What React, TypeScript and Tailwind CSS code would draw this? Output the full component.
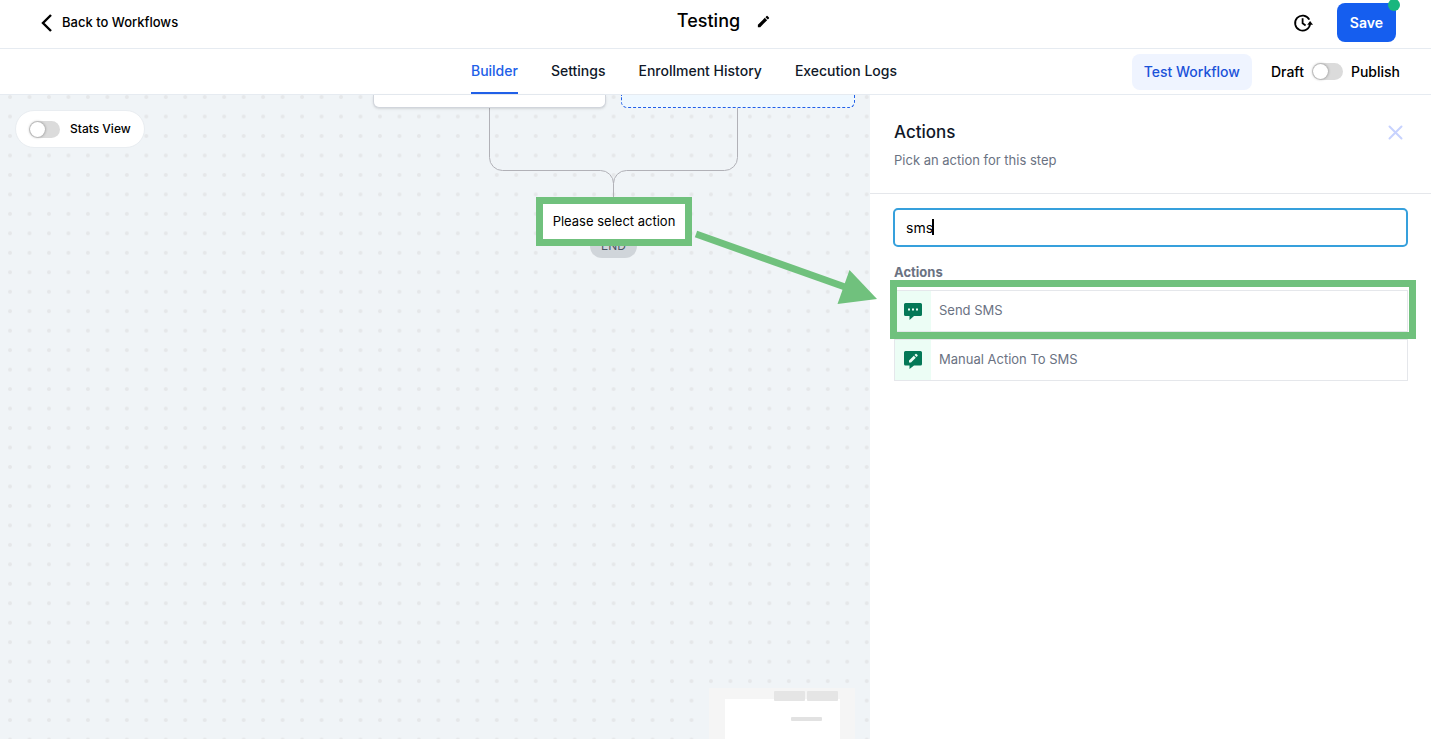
import { useState } from 'react';
import { MdEdit } from 'react-icons/md';

const tabs = ['Builder', 'Settings', 'Enrollment History', 'Execution Logs'];

const actions = [
  { name: 'Send SMS', icon: <SmsIcon /> },
  { name: 'Manual Action To SMS', icon: <ManualSmsIcon /> },
];

function SmsIcon() {
  return (
    <svg width="18" height="17" viewBox="0 0 18 17" aria-hidden="true">
      <path d="M1.5 0h15A1.5 1.5 0 0 1 18 1.5v10a1.5 1.5 0 0 1-1.5 1.5H10l-4.500 4V13h-4A1.5 1.5 0 0 1 0 11.5v-10A1.5 1.5 0 0 1 1.5 0Z" fill="#047857" />
      <path d="M4 5.500h2v2H4zM8 5.500h2v2H8zM12 5.500h2v2h-2z" fill="#ecfdf5" />
    </svg>
  );
}

function ManualSmsIcon() {
  return (
    <svg width="18" height="18" viewBox="0 0 18 18" aria-hidden="true">
      <path d="M1.5 0h15A1.5 1.5 0 0 1 18 1.5v11.5a1.5 1.5 0 0 1-1.5 1.5H10L5.5 18v-3.500h-4A1.5 1.5 0 0 1 0 13V1.5A1.5 1.5 0 0 1 1.5 0Z" fill="#047857" />
      <path d="M5 11.5V9.500l4.800-4.800 2 2L7 11.5zM10.5 4l1-1a.7.7 0 0 1 1 0l1 1a.7.7 0 0 1 0 1l-1 1z" fill="#ecfdf5" />
    </svg>
  );
}

function HistoryIcon() {
  return (
    <svg width="20" height="20" viewBox="0 0 20 20" fill="none" stroke="#000" strokeWidth="1.8" aria-hidden="true">
      <path d="M17.100 10.500A7.500 7.500 0 1 1 16.300 6.700" />
      <path d="M9.600 5.300v5l3 2.200" />
      <path d="M14.200 11.700 17.100 8l2.900 3.700z" fill="#000" stroke="none" />
    </svg>
  );
}

function Switch({ id, label }: { id: string; label: string }) {
  const [on, setOn] = useState(false);
  return (
    <span className="relative flex h-[17px] w-[31px] shrink-0">
      <input
        id={id}
        type="checkbox"
        role="switch"
        aria-label={label}
        checked={on}
        onChange={() => setOn(!on)}
        className="peer h-full w-full appearance-none rounded-full bg-[#dbdbdb] checked:bg-blue-600"
      />
      <span className="pointer-events-none absolute top-px left-px size-[15px] rounded-full bg-white shadow-[0_0_3px_rgba(0,0,0,0.45)] peer-checked:left-[15px]" />
    </span>
  );
}

function Header() {
  return (
    <header className="grid h-[49px] grid-cols-[1fr_auto_1fr] items-center border-b border-[#e6ebf1] pr-[35px] pb-[3px] pl-10">
      <a href="#workflows" className="flex items-center gap-2 text-[13px] font-medium">
        <svg width="14" height="20" viewBox="0 0 14 20" fill="none" stroke="#000" strokeWidth="2.4" aria-hidden="true">
          <path d="M11 2 3 10l8 8" />
        </svg>
        Back to Workflows
      </a>
      <div className="ml-3 flex items-center gap-4 pb-[3px]">
        <h1 className="text-lg font-medium">Testing</h1>
        <button type="button" aria-label="Rename workflow">
          <MdEdit size={15} />
        </button>
      </div>
      <div className="flex items-center justify-end gap-6">
        <button type="button" aria-label="Version history">
          <HistoryIcon />
        </button>
        <button type="button" className="relative h-[39px] rounded-lg bg-[#155eef] px-[13px] text-sm font-semibold text-white">
          Save
          <span className="absolute -top-1 -right-1 size-3 rounded-full bg-[#19b67e]" />
        </button>
      </div>
    </header>
  );
}

function TabBar() {
  const [active, setActive] = useState('Builder');
  return (
    <nav className="grid h-[46px] grid-cols-[1fr_auto_1fr] items-center border-b border-[#e6ebf1] pr-[31px]">
      <span />
      <div className="mr-8 flex gap-[33px] self-stretch">
        {tabs.map((tab) => (
          <button
            key={tab}
            type="button"
            onClick={() => setActive(tab)}
            className={
              tab === active
                ? 'border-b-2 border-[#2160e8] text-sm font-medium text-[#2160e8]'
                : 'border-b-2 border-transparent text-sm font-medium text-gray-900'
            }
          >
            {tab}
          </button>
        ))}
      </div>
      <div className="flex items-center justify-end text-sm font-medium">
        <button type="button" className="mr-[19px] h-9 rounded-lg bg-[#eff4ff] px-3 text-[#1a52d9]">
          Test Workflow
        </button>
        <span className="mr-2">Draft</span>
        <Switch id="publish" label="Publish workflow" />
        <label htmlFor="publish" className="ml-2">Publish</label>
      </div>
    </nav>
  );
}

function MiniMap() {
  return (
    <svg className="absolute right-[15px] bottom-0" width="146" height="51" aria-hidden="true">
      <rect width="146" height="51" fill="#f5f5f5" />
      <rect x="16" y="11" width="115" height="40" fill="#fff" />
      <rect x="65" y="3" width="31" height="10" rx="1" fill="#e5e5e5" />
      <rect x="98" y="3" width="31" height="10" rx="1" fill="#e5e5e5" />
      <rect x="82" y="29" width="31" height="4" rx="1" fill="#e2e2e2" />
    </svg>
  );
}

function Canvas() {
  return (
    <main className="relative z-10 min-w-0 flex-1 bg-[#f0f4f7]">
      <svg className="absolute inset-0 h-full w-full" aria-hidden="true">
        <defs>
          <pattern id="dots" x="0.3" y="-7.7" width="19.47" height="19.47" patternUnits="userSpaceOnUse">
            <circle cx="9.735" cy="9.735" r="2" fill="#e5e7e9" />
          </pattern>
        </defs>
        <rect width="100%" height="100%" fill="url(#dots)" />
        <g fill="none" stroke="#b1b1b7">
          <path d="M489.500 13v49.500a13 13 0 0 0 13 13h98a13 13 0 0 1 13 13V103" />
          <path d="M737.500 13v49.500a13 13 0 0 1-13 13h-98a13 13 0 0 0-13 13" />
        </g>
      </svg>

      {/* Branch nodes scrolled under the tab bar */}
      <div className="absolute top-0 left-[373px] h-[13px] w-[233px] rounded-b-md border border-t-0 border-gray-300 bg-white shadow-sm" />
      <div className="absolute top-0 left-[621px] h-[13px] w-[234px] rounded-b-md border border-t-0 border-dashed border-[#2160e8] bg-[#eff8ff]" />

      <div className="absolute top-[139px] left-[590px] flex h-6 w-[47px] items-center justify-center rounded-full bg-[#d0d5da] text-xs text-gray-600">
        END
      </div>
      <button type="button" className="absolute top-[102px] left-[536px] h-[49px] w-[156px] border-[7px] border-[#70c17d] bg-white text-[13px]">
        Please select action
      </button>

      <div className="absolute top-[15px] left-[15px] flex h-[38px] items-center gap-[10px] rounded-full border border-[#e9edf1] bg-white px-[13px]">
        <Switch id="stats" label="Stats View" />
        <label htmlFor="stats" className="text-xs font-medium">Stats View</label>
      </div>

      <MiniMap />

      {/* Arrow from the empty step to the picked action */}
      <svg className="pointer-events-none absolute top-[135px] left-[690px]" width="190" height="80" aria-hidden="true">
        <path d="M6 4 155 57" stroke="#70c17d" strokeWidth="7" />
        <path d="M159.500 40 187 69 147.500 74z" fill="#70c17d" />
      </svg>
    </main>
  );
}

function ActionsPanel() {
  const [query, setQuery] = useState('sms');
  return (
    <aside className="w-[561px] shrink-0 bg-white">
      <div className="flex items-start justify-between border-b border-gray-200 px-6 pt-[25px] pb-[21px]">
        <div>
          <h2 className="text-[17px] leading-6 font-medium text-gray-900">Actions</h2>
          <p className="mt-1 text-[13px] leading-6 text-gray-500">Pick an action for this step</p>
        </div>
        <button type="button" aria-label="Close panel" className="mt-[5px] mr-1">
          <svg width="15" height="15" viewBox="0 0 15 15" stroke="#c7d2fe" strokeWidth="2" strokeLinecap="round" aria-hidden="true">
            <path d="m1.5 1.5 12 12M13.5 1.5l-12 12" />
          </svg>
        </button>
      </div>

      <div className="px-[23px] pt-[14px]">
        <div className="relative">
          <input
            type="text"
            aria-label="Search actions"
            value={query}
            onChange={(e) => setQuery(e.target.value)}
            className="block h-[39px] w-full rounded-[5px] border-2 border-[#36a0dc] bg-white px-[11px] text-sm text-black caret-transparent outline-none"
          />
          <span className="absolute top-[11px] left-[39px] h-4 w-[2px] bg-black" />
        </div>

        <h3 className="mt-[15px] pl-px text-[13px] leading-5 font-bold text-gray-500">Actions</h3>
        <ul className="mt-2 flex flex-col gap-[7px] pl-px">
          {actions.map((action, i) => (
            <li key={action.name} className="relative">
              <button type="button" className="flex h-[42px] w-full items-center border border-gray-200 bg-white text-left text-[13px] text-gray-500">
                <span className="flex w-9 items-center justify-center self-stretch bg-[#ecfdf5]">{action.icon}</span>
                <span className="ml-2">{action.name}</span>
              </button>
              {i === 0 && <span className="pointer-events-none absolute -top-[10px] -right-2 -bottom-[7px] -left-1 border-[7px] border-[#70c17d]" />}
            </li>
          ))}
        </ul>
      </div>
    </aside>
  );
}

export default function App() {
  return (
    <div className="flex min-h-screen flex-col bg-white font-[Inter,sans-serif] text-black">
      <Header />
      <TabBar />
      <div className="flex flex-1">
        <Canvas />
        <ActionsPanel />
      </div>
    </div>
  );
}
